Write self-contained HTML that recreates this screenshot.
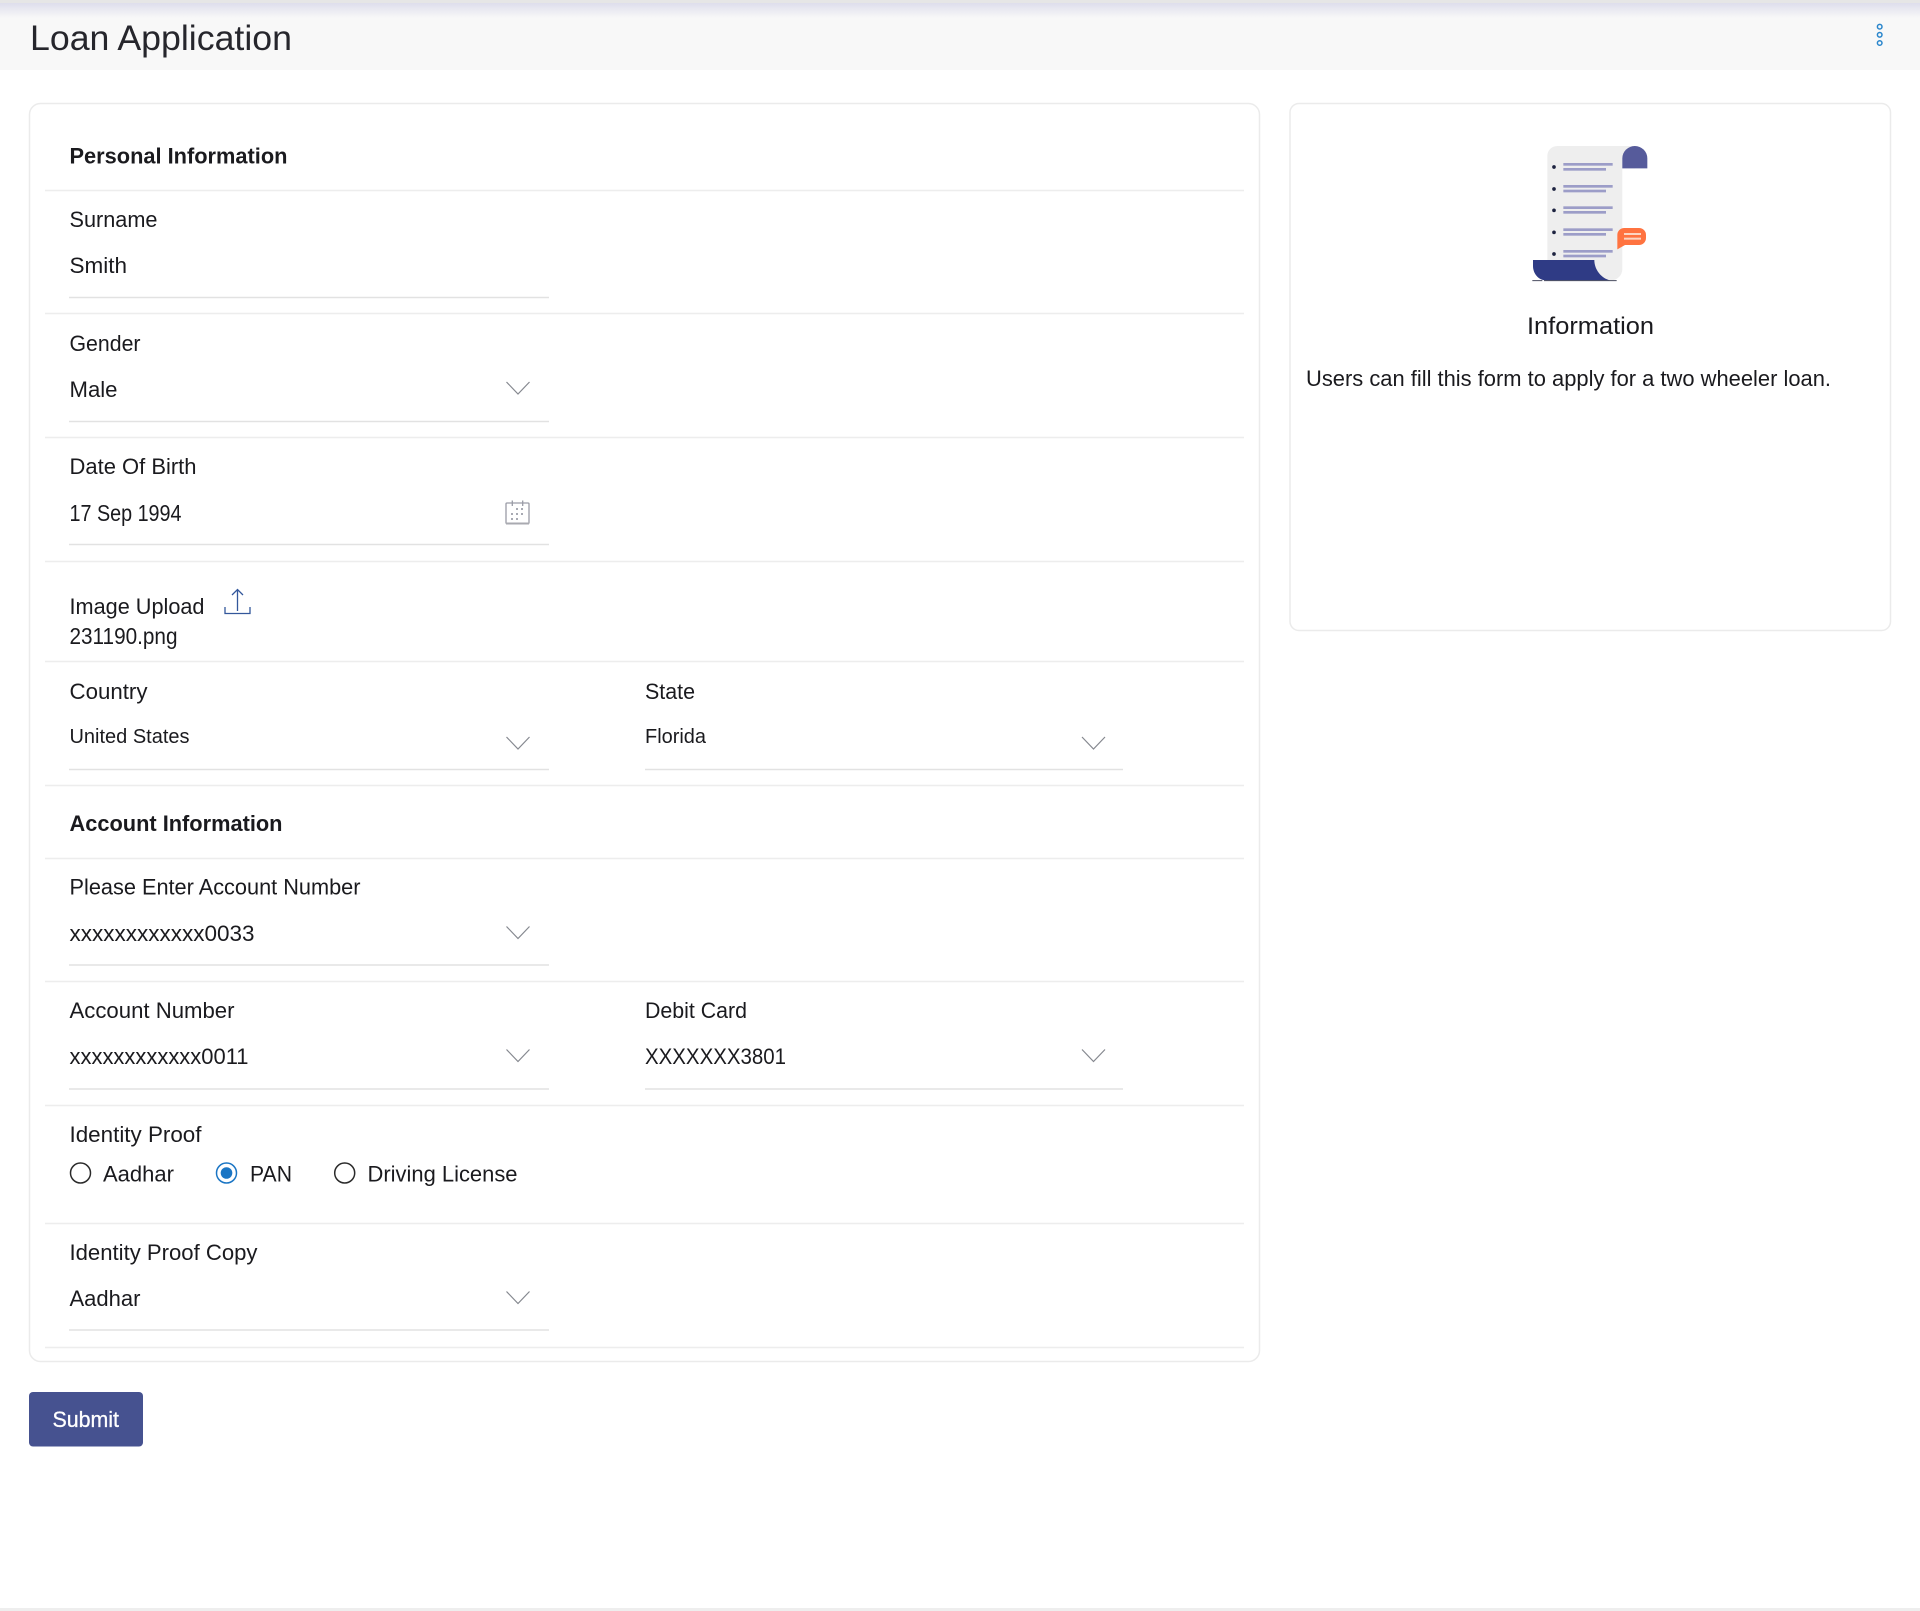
<!DOCTYPE html>
<html lang="en">
<head>
<meta charset="utf-8">
<title>Loan Application</title>
<style>
html,body{margin:0;padding:0;background:#fff;width:1920px;height:1611px;overflow:hidden}
svg{display:block}
text{font-family:"Liberation Sans",Arial,sans-serif;font-size:22px;fill:#1a1a1e}
.b{font-weight:700}
.div{stroke:#ededed;stroke-width:1.5}
.ul{stroke:#e2e2e2;stroke-width:1.6}
.chev{fill:none;stroke:#85888f;stroke-width:1.2}
</style>
</head>
<body>
<svg xmlns="http://www.w3.org/2000/svg" width="1920" height="1611" viewBox="0 0 1920 1611">
<defs>
<linearGradient id="sh" x1="0" y1="0" x2="0" y2="1">
<stop offset="0" stop-color="#dedeec"/>
<stop offset="1" stop-color="#f8f8f8"/>
</linearGradient>
<g id="chev"><path class="chev" d="M0 0 L11.5 12 L23 0"/></g>
</defs>

<!-- page header -->
<rect x="0" y="0" width="1920" height="70" fill="#f8f8f8"/>
<rect x="0" y="3" width="1920" height="15" fill="url(#sh)"/>
<rect x="0" y="0" width="1920" height="3" fill="#e6e6e6"/>
<text x="30" y="50" style="font-size:35px;fill:#26262c" textLength="262" lengthAdjust="spacingAndGlyphs">Loan Application</text>
<g fill="none" stroke="#2a86cc" stroke-width="1.5">
<circle cx="1879.7" cy="26.7" r="2.3"/><circle cx="1879.7" cy="34.8" r="2.3"/><circle cx="1879.7" cy="43" r="2.3"/>
</g>

<!-- main card -->
<rect x="29.5" y="103.5" width="1230" height="1258" rx="11" fill="#fff" stroke="#ebebeb" stroke-width="1.5"/>

<!-- dividers -->
<line class="div" x1="45" x2="1244" y1="190.5" y2="190.5"/>
<line class="div" x1="45" x2="1244" y1="313.5" y2="313.5"/>
<line class="div" x1="45" x2="1244" y1="437.5" y2="437.5"/>
<line class="div" x1="45" x2="1244" y1="561.5" y2="561.5"/>
<line class="div" x1="45" x2="1244" y1="661.5" y2="661.5"/>
<line class="div" x1="45" x2="1244" y1="785.5" y2="785.5"/>
<line class="div" x1="45" x2="1244" y1="858.5" y2="858.5"/>
<line class="div" x1="45" x2="1244" y1="981.5" y2="981.5"/>
<line class="div" x1="45" x2="1244" y1="1105.5" y2="1105.5"/>
<line class="div" x1="45" x2="1244" y1="1223.5" y2="1223.5"/>
<line class="div" x1="45" x2="1244" y1="1347.5" y2="1347.5"/>

<!-- field underlines -->
<line class="ul" x1="69" x2="549" y1="297.5" y2="297.5"/>
<line class="ul" x1="69" x2="549" y1="421.5" y2="421.5"/>
<line class="ul" x1="69" x2="549" y1="544.5" y2="544.5"/>
<line class="ul" x1="69" x2="549" y1="769.5" y2="769.5"/>
<line class="ul" x1="645" x2="1123" y1="769.5" y2="769.5"/>
<line class="ul" x1="69" x2="549" y1="965" y2="965"/>
<line class="ul" x1="69" x2="549" y1="1089" y2="1089"/>
<line class="ul" x1="645" x2="1123" y1="1089" y2="1089"/>
<line class="ul" x1="69" x2="549" y1="1330" y2="1330"/>

<!-- Personal Information -->
<text class="b" x="69.5" y="163.5" textLength="218" lengthAdjust="spacingAndGlyphs">Personal Information</text>
<text x="69.5" y="227" textLength="88" lengthAdjust="spacingAndGlyphs">Surname</text>
<text x="69.5" y="273" textLength="57.5" lengthAdjust="spacingAndGlyphs">Smith</text>
<text x="69.5" y="351" textLength="71" lengthAdjust="spacingAndGlyphs">Gender</text>
<text x="69.5" y="397" textLength="48" lengthAdjust="spacingAndGlyphs">Male</text>
<use href="#chev" x="506.5" y="382"/>
<text x="69.5" y="474" textLength="127" lengthAdjust="spacingAndGlyphs">Date Of Birth</text>
<text x="69.5" y="521" style="font-size:23px" textLength="112" lengthAdjust="spacingAndGlyphs">17 Sep 1994</text>

<!-- calendar icon -->
<g fill="none" stroke="#9a9ca6" stroke-width="1.3">
<rect x="506" y="503" width="23" height="20.5" rx="1"/>
<path d="M512.3 500.5 V506 M522.7 500.5 V506"/>
</g>
<path d="M506 523.5 H529" stroke="#a9aab0" stroke-width="2"/>
<g fill="#a8aab3">
<rect x="516" y="508" width="2" height="2"/><rect x="521" y="508" width="2" height="2"/>
<rect x="511" y="513" width="2" height="2"/><rect x="516" y="513" width="2" height="2"/><rect x="521" y="513" width="2" height="2"/>
<rect x="511" y="518" width="2" height="2"/><rect x="516" y="518" width="2" height="2"/>
</g>

<text x="69.5" y="614" textLength="135" lengthAdjust="spacingAndGlyphs">Image Upload</text>
<!-- upload icon -->
<path fill="none" stroke="#33579b" stroke-width="1.3" d="M237.5 611 V589.5 M232 595 L237.5 589.5 L243 595 M225 607 V613.5 H250 V607"/>
<text x="69.5" y="644" style="font-size:23px" textLength="108" lengthAdjust="spacingAndGlyphs">231190.png</text>

<text x="69.5" y="699" textLength="78" lengthAdjust="spacingAndGlyphs">Country</text>
<text x="69.5" y="743" style="font-size:20px" textLength="120" lengthAdjust="spacingAndGlyphs">United States</text>
<use href="#chev" x="506.5" y="737"/>
<text x="645" y="699" textLength="50" lengthAdjust="spacingAndGlyphs">State</text>
<text x="645" y="743" style="font-size:20px" textLength="61" lengthAdjust="spacingAndGlyphs">Florida</text>
<use href="#chev" x="1082" y="737"/>

<!-- Account Information -->
<text class="b" x="69.5" y="831" textLength="213" lengthAdjust="spacingAndGlyphs">Account Information</text>
<text x="69.5" y="894.5" textLength="291" lengthAdjust="spacingAndGlyphs">Please Enter Account Number</text>
<text x="69.5" y="941" textLength="185" lengthAdjust="spacingAndGlyphs">xxxxxxxxxxxx0033</text>
<use href="#chev" x="506.5" y="926.5"/>
<text x="69.5" y="1018" textLength="165" lengthAdjust="spacingAndGlyphs">Account Number</text>
<text x="69.5" y="1064" textLength="179" lengthAdjust="spacingAndGlyphs">xxxxxxxxxxxx0011</text>
<use href="#chev" x="506.5" y="1049.5"/>
<text x="645" y="1018" textLength="102" lengthAdjust="spacingAndGlyphs">Debit Card</text>
<text x="645" y="1064" textLength="141" lengthAdjust="spacingAndGlyphs">XXXXXXX3801</text>
<use href="#chev" x="1082" y="1049.5"/>

<text x="69.5" y="1142" textLength="132" lengthAdjust="spacingAndGlyphs">Identity Proof</text>
<circle cx="80.5" cy="1173" r="10" fill="#fff" stroke="#2a2a2a" stroke-width="1.5"/>
<text x="103" y="1181.5" textLength="71" lengthAdjust="spacingAndGlyphs">Aadhar</text>
<circle cx="226.5" cy="1173" r="10" fill="#fff" stroke="#1a75c4" stroke-width="1.5"/>
<circle cx="226.5" cy="1173" r="5.8" fill="#1a75c4"/>
<text x="250" y="1181.5" textLength="42" lengthAdjust="spacingAndGlyphs">PAN</text>
<circle cx="344.7" cy="1173" r="10" fill="#fff" stroke="#2a2a2a" stroke-width="1.5"/>
<text x="367.5" y="1181.5" textLength="150" lengthAdjust="spacingAndGlyphs">Driving License</text>

<text x="69.5" y="1260" textLength="188" lengthAdjust="spacingAndGlyphs">Identity Proof Copy</text>
<text x="69.5" y="1306" textLength="71" lengthAdjust="spacingAndGlyphs">Aadhar</text>
<use href="#chev" x="506.5" y="1291.5"/>

<!-- submit -->
<rect x="29" y="1392" width="114" height="54.5" rx="4" fill="#465290"/>
<text x="52.5" y="1427" textLength="66.5" lengthAdjust="spacingAndGlyphs" style="fill:#fff;stroke:#fff;stroke-width:.3">Submit</text>

<!-- info card -->
<rect x="1290" y="103.5" width="600.5" height="527" rx="9" fill="#fff" stroke="#ebebeb" stroke-width="1.5"/>
<g transform="translate(1460,120) scale(.33333)">
<path d="M292 78 H525 V145 H487 V447 a34 34 0 0 1 -34 34 H262 V108 a30 30 0 0 1 30 -30 Z" fill="#eeeeee"/>
<path d="M487 145 V115 a37.5 37 0 0 1 75 0 V145 Z" fill="#565b9b"/>
<g fill="#9c9dc8">
<rect x="310" y="129" width="148" height="8"/><rect x="310" y="144" width="128" height="8"/>
<rect x="310" y="195" width="148" height="8"/><rect x="310" y="209" width="128" height="8"/>
<rect x="310" y="259" width="148" height="8"/><rect x="310" y="273" width="128" height="8"/>
<rect x="310" y="325" width="148" height="8"/><rect x="310" y="339" width="128" height="8"/>
<rect x="310" y="390" width="148" height="8"/><rect x="310" y="404" width="128" height="8"/>
</g>
<g fill="#1d2340">
<circle cx="282" cy="141" r="5.5"/><circle cx="282" cy="207" r="5.5"/><circle cx="282" cy="271" r="5.5"/><circle cx="282" cy="337" r="5.5"/><circle cx="282" cy="402" r="5.5"/>
</g>
<path d="M219 420 H403 C403 450 425 475 450 481 H258 C235 481 219 460 219 438 Z" fill="#2f3b85"/>
<path d="M217 482 H247 M252 482 H470" stroke="#4a4d60" stroke-width="3" fill="none"/>
<path d="M472 345 a21 21 0 0 1 21 -21 H537 a21 21 0 0 1 21 21 V354 a21 21 0 0 1 -21 21 H495 L472 388 Z" fill="#ff7340"/>
<rect x="492" y="339" width="51" height="6" fill="#fcd5c2"/>
<rect x="492" y="353" width="51" height="6" fill="#fcd5c2"/>
</g>
<text x="1527" y="334" style="font-size:24px" textLength="127" lengthAdjust="spacingAndGlyphs">Information</text>
<text x="1306" y="386" textLength="525" lengthAdjust="spacingAndGlyphs">Users can fill this form to apply for a two wheeler loan.</text>

<!-- bottom edge -->
<rect x="0" y="1608" width="1920" height="3" fill="#eeeeee"/>
</svg>
</body>
</html>
